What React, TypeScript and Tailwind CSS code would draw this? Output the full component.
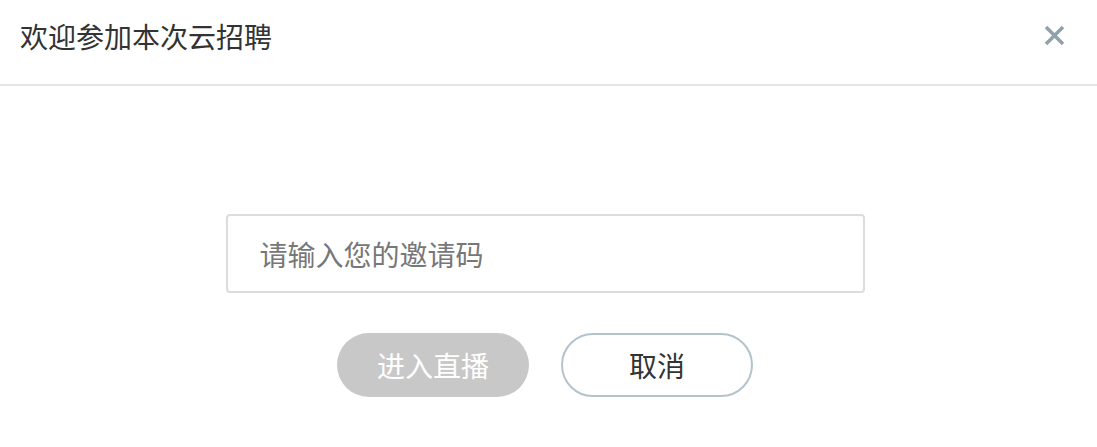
export default function App() {
  return (
    <div className="h-[447px] w-full bg-white font-['Noto_Sans_CJK_SC',sans-serif]">
      <div className="flex h-[86px] items-start justify-between border-b-2 border-[#e6e6e6] pl-[20px] pr-[32px]">
        <h2 className="pt-[22px] text-[28px] leading-none text-[#333]">
          欢迎参加本次云招聘
        </h2>
        <button className="mt-[25px] text-[#8fa2ab]" aria-label="关闭">
          <svg width="21" height="21" viewBox="0 0 21 21" fill="none" className="block">
            <path d="M2 2 L19 19 M19 2 L2 19" stroke="currentColor" strokeWidth="3.5" />
          </svg>
        </button>
      </div>

      <div className="flex w-[1090px] flex-col items-center pt-[128px]">
        <input
          className="h-[79px] w-[639px] rounded-[4px] border-2 border-[#dcdcdc] px-[32px] text-[28px] text-[#333] outline-none placeholder:text-[#777]"
          placeholder="请输入您的邀请码"
        />
        <div className="mt-[40px] flex gap-[32px]">
          <button className="h-[64px] w-[192px] rounded-full bg-[#c8c8c8] text-[28px] text-white">
            进入直播
          </button>
          <button className="h-[64px] w-[192px] rounded-full border-2 border-[#b4c3cb] bg-white text-[28px] text-[#333]">
            取消
          </button>
        </div>
      </div>
    </div>
  );
}
